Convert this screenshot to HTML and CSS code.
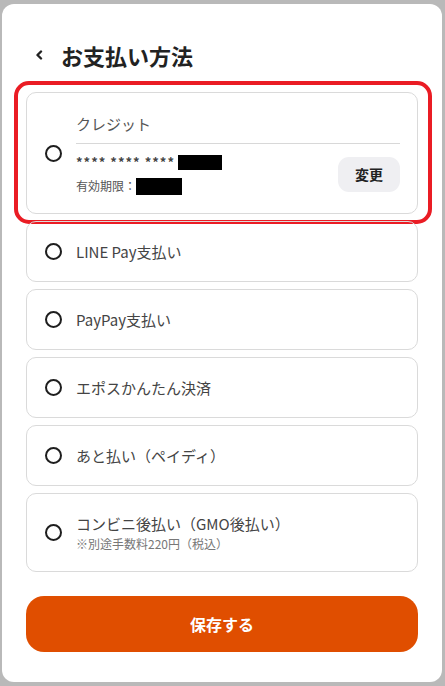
FILE: index.html
```html
<!DOCTYPE html>
<html lang="ja">
<head>
    <meta charset="UTF-8">
    <meta name="viewport" content="width=device-width, initial-scale=1.0">
    <title>お支払い方法</title>
    <link rel="stylesheet" href="styles.css">
</head>
<body>
    <div class="modal">
        <div class="header">
            <span class="back">
                <svg width="8" height="10" viewBox="0 0 8 10"><path d="M6 1.5 L2.5 5 L6 8.5" fill="none" stroke="#222" stroke-width="2.4" stroke-linecap="round" stroke-linejoin="round"/></svg>
            </span>
            <h1 class="title">お支払い方法</h1>
        </div>

        <div class="methods">
            <div class="method method-card">
                <span class="radio"></span>
                <div class="card-body">
                    <div class="method-name">クレジット</div>
                    <div class="card-row">
                        <div class="card-info">
                            <div class="card-number"><span>**** **** ****</span><span class="mask mask-num"></span></div>
                            <div class="card-exp">有効期限：<span class="mask mask-exp"></span></div>
                        </div>
                        <button class="change-btn">変更</button>
                    </div>
                </div>
                <div class="highlight"></div>
            </div>

            <div class="method">
                <span class="radio"></span>
                <div class="method-name">LINE Pay支払い</div>
            </div>
            <div class="method">
                <span class="radio"></span>
                <div class="method-name">PayPay支払い</div>
            </div>
            <div class="method">
                <span class="radio"></span>
                <div class="method-name">エポスかんたん決済</div>
            </div>
            <div class="method">
                <span class="radio"></span>
                <div class="method-name">あと払い（ペイディ）</div>
            </div>
            <div class="method method-tall">
                <span class="radio"></span>
                <div>
                    <div class="method-name">コンビニ後払い（GMO後払い）</div>
                    <div class="method-note">※別途手数料220円（税込）</div>
                </div>
            </div>
        </div>

        <button class="save-btn">保存する</button>
    </div>
</body>
</html>
```

FILE: styles.css
```css
body {
    margin: 0;
    background-color: #b9b9b9;
    font-family: "Noto Sans CJK JP", "Noto Sans", sans-serif;
    color: #333;
}

.modal {
    box-sizing: border-box;
    width: 440px;
    height: 678px;
    margin: 4px 0 0 2px;
    background-color: #fff;
    border-radius: 12px;
    padding: 36px 24px 0 24px;
}

.header {
    display: flex;
    align-items: center;
    height: 30px;
    margin-bottom: 22px;
}

.back {
    display: flex;
    width: 26px;
    padding-left: 9px;
}

.title {
    margin: 0;
    font-size: 22px;
    font-weight: 700;
    color: #222;
    line-height: 30px;
}

.methods {
    display: flex;
    flex-direction: column;
    gap: 7px;
}

.method {
    position: relative;
    box-sizing: border-box;
    display: flex;
    align-items: center;
    height: 61px;
    border: 1px solid #dadada;
    border-radius: 10px;
    padding: 0 17px 0 18px;
}

.method-card {
    height: 122px;
}

.method-tall {
    height: 79px;
}

.radio {
    flex: none;
    box-sizing: border-box;
    width: 17px;
    height: 17px;
    border: 2px solid #1e1e1e;
    border-radius: 50%;
    margin-right: 14px;
}

.method-name {
    font-size: 15px;
    line-height: 22px;
    color: #444;
}

.method-note {
    font-size: 12px;
    line-height: 16px;
    color: #777;
    margin-top: 1px;
}

.card-body {
    flex: 1;
    padding-top: 2px;
}

.card-body .method-name {
    color: #555;
    padding-bottom: 8px;
    border-bottom: 1px solid #d8d8d8;
}

.card-row {
    display: flex;
    align-items: center;
    justify-content: space-between;
    padding-top: 9px;
}

.card-number {
    display: flex;
    align-items: center;
    font-size: 13px;
    font-weight: 700;
    line-height: 18px;
    color: #444;
    letter-spacing: 1px;
}

.card-exp {
    display: flex;
    align-items: center;
    font-size: 12px;
    line-height: 18px;
    color: #555;
    margin-top: 6px;
}

.mask {
    display: inline-block;
    background-color: #000;
}

.mask-num {
    width: 44px;
    height: 15px;
    margin-left: 3px;
}

.mask-exp {
    width: 46px;
    height: 17px;
}

.change-btn {
    width: 62px;
    height: 35px;
    border: none;
    border-radius: 11px;
    background-color: #efeff2;
    font-family: inherit;
    font-size: 14px;
    font-weight: 700;
    color: #222;
}

.highlight {
    position: absolute;
    top: -12px;
    left: -13px;
    right: -15px;
    bottom: -11px;
    border: 4px solid #ea1c24;
    border-radius: 15px;
    pointer-events: none;
}

.save-btn {
    display: block;
    width: 392px;
    height: 56px;
    margin-top: 24px;
    border: none;
    border-radius: 18px;
    background-color: #e04e00;
    color: #fff;
    font-family: inherit;
    font-size: 16px;
    font-weight: 700;
}
```
